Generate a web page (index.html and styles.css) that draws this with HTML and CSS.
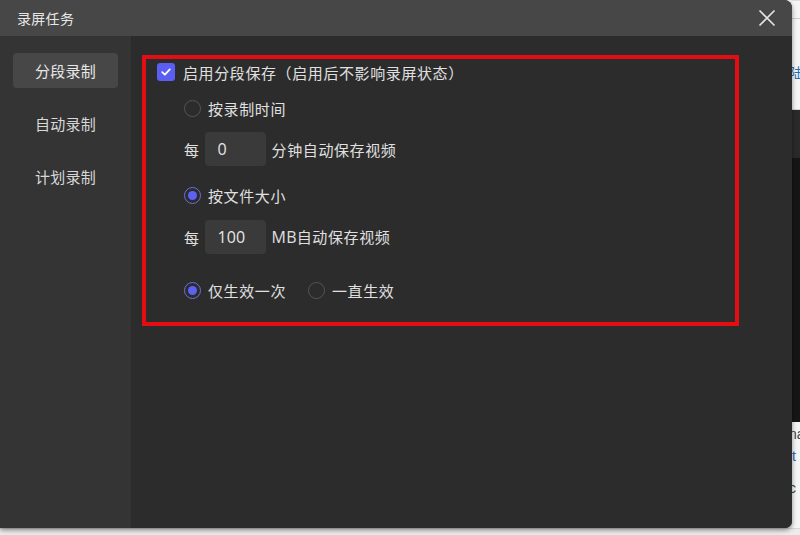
FILE: index.html
```html
<!DOCTYPE html>
<html lang="zh-CN">
<head>
<meta charset="utf-8">
<title>录屏任务</title>
<link rel="stylesheet" href="styles.css">
</head>
<body>
<div class="screen">
  <div class="top">
    <div class="dialog">
      <div class="titlebar">
        <span class="title">录屏任务</span>
        <svg class="close" width="18" height="18" viewBox="0 0 18 18"><path d="M1.5 1.5 L16.5 16.5 M16.5 1.5 L1.5 16.5" stroke="#e4e4e4" stroke-width="1.6" fill="none"/></svg>
      </div>
      <div class="body">
        <nav class="sidebar">
          <div class="nav-item active">分段录制</div>
          <div class="nav-item">自动录制</div>
          <div class="nav-item">计划录制</div>
        </nav>
        <main class="content">
          <div class="panel">
            <div class="row row-check">
              <span class="checkbox"><svg width="12" height="12" viewBox="0 0 12 12"><path d="M2.2 6.2 L4.9 8.7 L9.8 3.4" stroke="#fff" stroke-width="1.8" fill="none" stroke-linecap="round" stroke-linejoin="round"/></svg></span>
              <span class="label">启用分段保存（启用后不影响录屏状态）</span>
            </div>
            <div class="row row-r1">
              <span class="radio"></span>
              <span class="label">按录制时间</span>
            </div>
            <div class="row row-in1">
              <span class="label">每</span>
              <span class="input">0</span>
              <span class="label">分钟自动保存视频</span>
            </div>
            <div class="row row-r2">
              <span class="radio checked"></span>
              <span class="label">按文件大小</span>
            </div>
            <div class="row row-in2">
              <span class="label">每</span>
              <span class="input">100</span>
              <span class="label"><span class="latin">MB</span>自动保存视频</span>
            </div>
            <div class="row row-r3">
              <span class="radio checked"></span>
              <span class="label">仅生效一次</span>
              <span class="radio second"></span>
              <span class="label">一直生效</span>
            </div>
          </div>
        </main>
      </div>
    </div>
    <div class="strip">
      <div class="strip-light"><span class="frag frag-blue">陆</span></div>
      <div class="strip-dark"></div>
      <div class="strip-light2"><span class="frag f1">na</span><span class="frag frag-blue f2">it</span><span class="frag f3">c</span></div>
    </div>
  </div>
  <div class="bottom"></div>
</div>
</body>
</html>
```
FILE: styles.css
```css
* { box-sizing: border-box; }
html, body { margin: 0; padding: 0; }
body {
  width: 800px;
  height: 535px;
  overflow: hidden;
  background: #eeeeee;
  font-family: "Noto Sans CJK SC", "Noto Sans", sans-serif;
  color: #e2e2e2;
}
.screen { display: flex; flex-direction: column; width: 800px; height: 535px; }
.top { display: flex; height: 528px; }
.dialog {
  width: 792px;
  height: 528px;
  display: flex;
  flex-direction: column;
  border-radius: 0 8px 7px 0;
  overflow: hidden;
  background: #2c2c2c;
  box-shadow: 0 2px 5px rgba(0,0,0,0.45);
  position: relative;
  z-index: 1;
}
.titlebar {
  height: 36px;
  flex: none;
  background: #474747;
  display: flex;
  align-items: center;
  justify-content: space-between;
  padding: 0 16px 0 17px;
}
.title { font-size: 14px; color: #e6e6e6; letter-spacing: 0.3px; }
.close { display: block; margin-top: 0; }
.body { flex: 1; display: flex; }
.sidebar {
  width: 132px;
  flex: none;
  background: #343434;
  border-right: 1px solid #2a2a2a;
  padding: 17px 0 0 13px;
  display: flex;
  flex-direction: column;
  gap: 18px;
}
.nav-item {
  width: 105px;
  height: 35px;
  border-radius: 4px;
  font-size: 15px;
  color: #d8d8d8;
  display: flex;
  align-items: center;
  justify-content: center;
  letter-spacing: 0.3px;
}
.nav-item.active { background: #474747; color: #e8e8e8; }
.content { flex: 1; background: #2c2c2c; padding: 19px 0 0 10px; }
.panel {
  width: 597px;
  height: 271px;
  border: 4px solid #e40d12;
  padding: 0 0 0 11px;
  display: flex;
  flex-direction: column;
}
.row { display: flex; align-items: center; height: 26px; font-size: 15px; }
.label { color: #e0e0e0; white-space: nowrap; letter-spacing: 0.6px; }
.latin { font-family: "Open Sans", "Noto Sans", sans-serif; font-size: 16px; letter-spacing: 0.2px; }
.row-check { margin-top: 0; }
.row-check .label { margin-left: 8px; }
.checkbox {
  width: 18px;
  height: 18px;
  border-radius: 3px;
  background: #5a5ef2;
  display: flex;
  align-items: center;
  justify-content: center;
}
.checkbox svg { display: block; }
.row-r1, .row-r2, .row-r3, .row-in1, .row-in2 { padding-left: 27px; }
.row-r1 { margin-top: 10px; }
.row-in1 { margin-top: 11px; height: 34px; }
.row-r2 { margin-top: 16px; }
.row-in2 { margin-top: 12px; height: 34px; }
.row-r3 { margin-top: 23px; }
.radio {
  width: 17px;
  height: 17px;
  border-radius: 50%;
  border: 1px solid #555555;
  flex: none;
  margin-right: 7px;
  display: flex;
  align-items: center;
  justify-content: center;
}
.radio.checked { border: 1.5px solid #6c70d8; }
.radio.checked::after {
  content: "";
  width: 9px;
  height: 9px;
  border-radius: 50%;
  background: #5d61f4;
}
.radio.second { margin-left: 22px; }
.input {
  width: 61px;
  height: 34px;
  background: #3a3a3a;
  border-radius: 4px;
  margin: 0 6px 0 5px;
  padding-left: 13px;
  display: flex;
  align-items: center;
  font-family: "Open Sans", "Noto Sans", sans-serif;
  font-size: 16px;
  color: #e6e6e6;
}
.strip { width: 8px; flex: none; display: flex; flex-direction: column; overflow: hidden; }
.strip-light {
  height: 110px;
  background: #f6f6f6;
  border-top: 1px solid #dddddd;
}
.strip-light::before {
  content: "";
  display: block;
  height: 17px;
  border-bottom: 1px solid #d0d0d0;
}
.strip-light::after {
  content: "";
  display: block;
  margin-top: 28px;
  border-top: 1px solid #d6d6d6;
}
.strip-dark {
  height: 312px;
  background: linear-gradient(#2a2a2a 0, #2a2a2a 48px, #161616 48px, #161616 100%);
}
.strip-light2 {
  flex: 1;
  background: #f6f6f6;
  display: flex;
  flex-direction: column;
  padding-top: 4px;
}
.frag { font-family: "Liberation Sans", sans-serif; font-size: 14px; color: #444; margin-left: -3px; line-height: 16px; }
.frag-blue { color: #1f6fb8; }
.strip-light .frag { display: block; margin-top: 46px; }
.f2 { margin-top: 6px; }
.f3 { margin-top: 16px; }
.bottom { flex: 1; background: #ececec; border-top: 1px solid #d8d8d8; }
```
